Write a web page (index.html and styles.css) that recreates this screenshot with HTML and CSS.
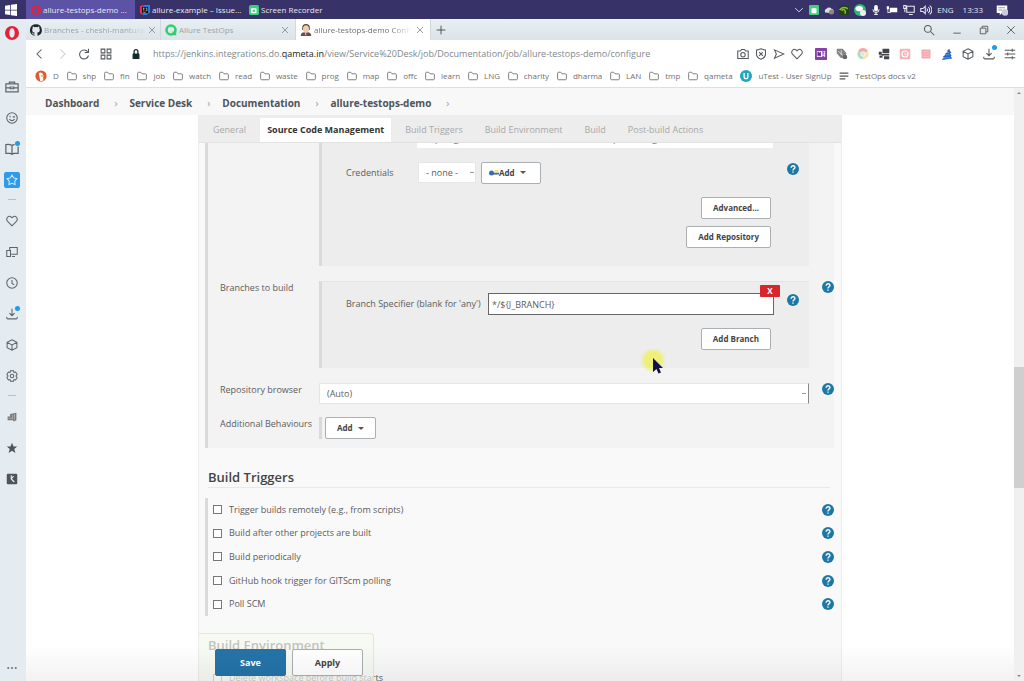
FILE: index.html
```html
<!DOCTYPE html>
<html lang="en">
<head>
<meta charset="utf-8">
<title>allure-testops-demo Config [Jenkins]</title>
<link rel="stylesheet" href="styles.css">
</head>
<body>
<svg class="defs" aria-hidden="true">
  <symbol id="opera" viewBox="0 0 16 16"><path fill="#e3223a" fill-rule="evenodd" d="M8 0a8 8 0 1 0 0 16A8 8 0 0 0 8 0zm0 2.600c2 0 3.100 2.400 3.100 5.400S10 13.400 8 13.400 4.900 11 4.900 8 6 2.600 8 2.600z"/></symbol>
  <symbol id="close" viewBox="0 0 16 16"><path d="M2 2l12 12M14 2L2 14"/></symbol>
  <symbol id="folder" viewBox="0 0 16 16"><path d="M1 12.500V3.500q0-1.500 1.500-1.500h3.500l2 2.500h5.500q1.500 0 1.500 1.500v6.500q0 1.500-1.500 1.500h-11Q1 14 1 12.500z"/></symbol>
  <symbol id="heart" viewBox="0 0 16 16"><path d="M8 14.500L2.200 8.600C-1 5 3 0 6.800 2.600L8 3.800l1.200-1.200C13 0 17 5 13.800 8.600z"/></symbol>
  <symbol id="cube" viewBox="0 0 16 16"><path d="M8 1l6.500 3.500v7L8 15l-6.500-3.500v-7zM1.500 4.500L8 8l6.500-3.500M8 8v7"/></symbol>
  <symbol id="download" viewBox="0 0 16 16"><path d="M8 1v9M4.500 6.800L8 10.200l3.500-3.400M1 11.500v1.500q0 1.500 1.500 1.500h11Q15 14.500 15 13v-1.500"/></symbol>
  <symbol id="help" viewBox="0 0 16 16"><circle cx="8" cy="8" r="8" fill="#1d78a8"/><path d="M5.500 6.300C5.500 2.500 11 3 10.600 6.200 10.400 7.700 8 8 8 10M8 11.300v1.700" fill="none" stroke="#fff" stroke-width="1.800"/></symbol>
</svg>
<div class="screen">
  <header class="taskbar">
    <button class="start" aria-label="Start"><svg class="i12" viewBox="0 0 16 16"><path fill="#fff" d="M0 2.200l7-1v6.300H0zM8 1l8-1v7.500H8zM0 8.500h7v6.300l-7-1zM8 8.500h8V16l-8-1z"/></svg></button>
    <button class="task task-on"><svg class="i10"><use href="#opera"/></svg>allure-testops-demo ...</button>
    <button class="task"><svg class="i10" viewBox="0 0 16 16"><path fill="#e5396b" d="M0 2l6-2v16l-6-3z"/><path fill="#2b7ff0" d="M6 0h10v12l-6 4H5z"/><path fill="#111" d="M3 3h10v10H3z"/><path stroke="#fff" d="M5 5h2M6 5v4M9 5h2v4H9M5 11.500h4"/></svg>allure-example – Issue...</button>
    <button class="task"><svg class="i10" viewBox="0 0 16 16"><rect width="16" height="16" rx="3" fill="#39cf7c"/><rect x="3" y="5" width="9" height="8" rx="1" fill="#fff"/><circle cx="8" cy="9" r="2" fill="#39cf7c"/></svg>Screen Recorder</button>
    <div class="tray">
      <svg class="i10 line" viewBox="0 0 16 16"><path d="M2 5l6 6 6-6"/></svg>
      <svg class="i10" viewBox="0 0 16 16"><rect width="16" height="16" rx="2" fill="#43cf7f"/><rect x="4" y="5" width="8" height="8" rx="1" fill="#fff"/></svg>
      <svg class="i10" viewBox="0 0 16 16"><path fill="#ddd" d="M2 12a4 4 0 0 1 2-6 5 5 0 0 1 8 0 4 4 0 0 1 2 7z"/><circle cx="12" cy="11" r="4" fill="#888"/></svg>
      <svg class="i10" viewBox="0 0 16 16"><rect width="16" height="16" fill="#27401f"/><path d="M1 8q5-7 13-2M4 9q4-4 6 1v4" fill="none" stroke="#7fc31c" stroke-width="2.500"/></svg>
      <svg class="i12" viewBox="0 0 16 16"><circle cx="8" cy="8" r="8" fill="#2eb872"/><ellipse cx="7" cy="6" rx="5" ry="3.500" fill="#fff"/><circle cx="12" cy="12" r="4" fill="#eee"/></svg>
      <svg class="i10" viewBox="0 0 16 16"><rect x="5" y="0" width="6" height="10" rx="3" fill="#fff"/><path d="M3 7q0 5 5 5t5-5M8 12v4M5 15h6" stroke="#fff" fill="none" stroke-width="1.500"/></svg>
      <svg class="i12" viewBox="0 0 16 16"><path fill="#fff" d="M5 5h10v6H5zM1 3h3v4H1zM2 7h1v4h3v1H2z"/></svg>
      <svg class="i12 line" viewBox="0 0 16 16"><path d="M5 3h10v8H5zM8 14h5M1 2h3v4H1zM2.500 6v5"/></svg>
      <svg class="i12 line" viewBox="0 0 16 16"><path d="M1 6h3l3-3v10l-3-3H1zM9 6q2 2 0 4M11 4q4 4 0 8M13 2q6 6 0 12"/></svg>
      <span>ENG</span><span class="clock">13:33</span>
      <svg class="i12" viewBox="0 0 16 16"><path fill="#fff" d="M1 2h14v10H8l-3 3v-3H1z"/><circle cx="12" cy="11" r="4.500" fill="#c9c9df"/><path d="M3 5h9M3 8h5" stroke="#777"/></svg>
    </div>
  </header>

  <div class="browser">
    <nav class="rail" aria-label="Browser sidebar">
      <button class="rail-logo" aria-label="Opera"><svg class="i14"><use href="#opera"/></svg></button>
      <button aria-label="Workspace"><svg class="i14 line" viewBox="0 0 16 16"><path d="M1 4.500h14v9H1zM5 4.500v-2h6v2M1 9h5M10 9h5M6 8h4v2H6z"/></svg></button>
      <button aria-label="Smiley"><svg class="i12 line" viewBox="0 0 16 16"><circle cx="8" cy="8" r="7"/><path d="M4.500 9.500q3.500 4 7 0M5.500 5v2M9 6.500h3"/></svg></button>
      <button class="dot" aria-label="News"><svg class="i14 line" viewBox="0 0 16 16"><path d="M8 4Q5 2 1 3v10h5l2 1 2-1h5V5M8 4v10M8 4q1-1 3-1"/></svg></button>
      <button aria-label="Pinboards"><span class="rail-on"><svg class="i12 line" viewBox="0 0 16 16"><path d="M8 1.500l2.200 3.700 4.300 1-2.800 3.400.3 4.400L8 12.500 4 14l.3-4.400L1.500 6.200l4.300-1z"/></svg></span></button>
      <hr>
      <button aria-label="Bookmarks"><svg class="i12 line"><use href="#heart"/></svg></button>
      <button aria-label="My Flow"><svg class="i12 line" viewBox="0 0 16 16"><path d="M5 6V2h10v9H7M1 6h5v8H1zM8 14h4"/></svg></button>
      <button aria-label="History"><svg class="i12 line" viewBox="0 0 16 16"><circle cx="8" cy="8" r="7"/><path d="M8 4v4.500l3 2"/></svg></button>
      <button class="dot" aria-label="Downloads"><svg class="i12 line"><use href="#download"/></svg></button>
      <button aria-label="Extensions"><svg class="i12 line"><use href="#cube"/></svg></button>
      <button aria-label="Settings"><svg class="i12 line" viewBox="0 0 16 16"><path d="M6 1h4l.6 2.200 2.200-.5 2 3.400L13.300 8l1.500 1.900-2 3.400-2.200-.5L10 15H6l-.6-2.200-2.200.5-2-3.400L2.700 8 1.200 6.100l2-3.400 2.200.5z"/><circle cx="8" cy="8" r="2.300"/></svg></button>
      <hr>
      <button aria-label="Tab extension"><svg class="i10" viewBox="0 0 16 16"><path fill="#777" d="M5 3l10-2v12l-5 2v-2H1V7h4z"/><path d="M9 4v8M12 3v9M2 10h6" stroke="#ccc"/></svg></button>
      <button aria-label="Favourites"><svg class="i12" viewBox="0 0 16 16"><path fill="#50555a" d="M8 1l2 5h5l-4 3.300 1.600 5.200L8 11.500l-4.600 3L5 9.300 1 6h5z"/></svg></button>
      <button aria-label="Timer"><svg class="i12" viewBox="0 0 16 16"><rect x="1" y="1" width="14" height="14" rx="1.500" fill="#50545a"/><path d="M7 3v5l4 4M10 4l-2 3" stroke="#eee" stroke-width="1.500" fill="none"/></svg></button>
      <button class="rail-more" aria-label="More"><svg class="i10" viewBox="0 0 16 16"><g fill="#777"><circle cx="2" cy="8" r="1.700"/><circle cx="8" cy="8" r="1.700"/><circle cx="14" cy="8" r="1.700"/></g></svg></button>
    </nav>

    <div class="window">
      <div class="tabs">
        <div class="tab"><svg class="i12" viewBox="0 0 16 16"><path fill="#1f252b" d="M8 .2a8 8 0 0 0-2.500 15.600c.4.100.5-.2.500-.4v-1.500c-2.200.5-2.700-1-2.700-1-.4-.9-.9-1.200-.9-1.200-.7-.5.100-.5.100-.5.800.100 1.200.8 1.200.8.700 1.200 1.900.9 2.300.7.100-.5.300-.9.500-1.100-1.800-.2-3.600-.9-3.600-4 0-.9.300-1.600.8-2.100-.1-.2-.4-1 .1-2.100 0 0 .7-.2 2.200.8a7.600 7.600 0 0 1 4 0c1.500-1 2.200-.8 2.200-.8.400 1.100.2 1.900.1 2.100.5.600.8 1.300.8 2.100 0 3.100-1.900 3.800-3.700 4 .3.300.6.800.6 1.500v2.200c0 .2.100.5.600.4A8 8 0 0 0 8 .2z"/></svg><span class="fade">Branches - cheshi-mantu/al</span><button aria-label="Close tab"><svg class="i8 line"><use href="#close"/></svg></button></div>
        <div class="tab"><svg class="i12" viewBox="0 0 16 16"><circle cx="8" cy="8" r="6" fill="none" stroke="#2fd06f" stroke-width="3.500"/><path fill="#2fd06f" d="M10 10h5v5h-5z"/></svg><span>Allure TestOps</span><button aria-label="Close tab"><svg class="i8 line"><use href="#close"/></svg></button></div>
        <div class="tab tab-on"><svg class="i12" viewBox="0 0 16 16"><path fill="#5a4030" d="M3 5q0-5 5-5t5 5v3H3z"/><ellipse cx="8" cy="6.500" rx="4" ry="5" fill="#efcfae"/><path fill="#555" d="M1 16q0-5 5-5h4q5 0 5 5z"/><path fill="#fff" d="M6 11h4l-2 5z"/><path fill="#c92f2f" d="M7 11.500h3l-1 4z"/></svg><span class="fade">allure-testops-demo Confi</span><button aria-label="Close tab"><svg class="i8 line"><use href="#close"/></svg></button></div>
        <button class="newtab" aria-label="New tab"><svg class="i10 line" viewBox="0 0 16 16"><path d="M8 1v14M1 8h14"/></svg></button>
        <div class="wincontrols">
          <button aria-label="Search tabs"><svg class="i12 line" viewBox="0 0 16 16"><circle cx="6.500" cy="6.500" r="4.500"/><path d="M10 10l5 5"/></svg></button>
          <button aria-label="Minimize"><svg class="i10 line" viewBox="0 0 16 16"><path d="M2 13h12"/></svg></button>
          <button aria-label="Restore"><svg class="i10 line" viewBox="0 0 16 16"><path d="M2 5h9v9H2zM5 5V2h9v9h-3"/></svg></button>
          <button aria-label="Close"><svg class="i10 line"><use href="#close"/></svg></button>
        </div>
      </div>

      <div class="address">
        <div class="navbtns">
          <button aria-label="Back"><svg class="i12 line" viewBox="0 0 16 16"><path d="M10 2L4 8l6 6"/></svg></button>
          <button class="dim" aria-label="Forward"><svg class="i12 line" viewBox="0 0 16 16"><path d="M6 2l6 6-6 6"/></svg></button>
          <button aria-label="Reload"><svg class="i12 line" viewBox="0 0 16 16"><path d="M13 5a6 6 0 1 0 1 5M14 1v5H9"/></svg></button>
          <button aria-label="Speed dial"><svg class="i12 line" viewBox="0 0 16 16"><path d="M1.500 1.500h5v5h-5zM9.500 1.500h5v5h-5zM1.500 9.500h5v5h-5zM9.500 9.500h5v5h-5z"/></svg></button>
        </div>
        <svg class="i10 lock" viewBox="0 0 16 16"><rect x="2.500" y="7" width="11" height="9" rx="1" fill="#14282b"/><path d="M5 8V4q0-3 3-3t3 3v4" fill="none" stroke="#14282b" stroke-width="2"/></svg>
        <span class="url">https://jenkins.integrations.do.<b>qameta.in</b>/view/Service%20Desk/job/Documentation/job/allure-testops-demo/configure</span>
        <div class="page-actions">
          <svg class="i12 line" viewBox="0 0 16 16"><path d="M1 4h3.500L6 2h4l1.500 2H15v10H1z"/><circle cx="8" cy="9" r="3"/></svg>
          <svg class="i12 line" viewBox="0 0 16 16"><path d="M8 1l6 2v5q0 5-6 7-6-2-6-7V3zM5.500 5.500l5 5M10.500 5.500l-5 5"/></svg>
          <svg class="i12 line" viewBox="0 0 16 16"><path d="M2 2.500L14.500 8 2 13.500 4.500 8z"/></svg>
          <svg class="i12 line"><use href="#heart"/></svg>
        </div>
        <div class="extensions">
          <svg class="i12" viewBox="0 0 16 16"><rect width="16" height="16" rx="1" fill="#8443a8"/><path fill="#fff" d="M2.500 4h11v8h-11z"/><path stroke="#6a2b92" stroke-width="1.500" d="M4 11V5l3 6V5M9.500 5.500h3M9.500 8h3M9.500 11h3"/></svg>
          <svg class="i12" viewBox="0 0 16 16"><path fill="#858585" d="M1 1h8l5 6-3 7-5-1L1 7z"/><path d="M3 4l6 6M7 3v6" stroke="#eee"/><circle cx="12" cy="12" r="3" fill="#666"/></svg>
          <svg class="i12" viewBox="0 0 16 16"><path fill="#f5aaa4" d="M8 8L1.500 4.500a7 7 0 0 1 13 0z"/><path fill="#fae59f" d="M8 8l6.500-3.500A7 7 0 0 1 8 15z"/><path fill="#a9dfc0" d="M8 8L1.500 4.500A7 7 0 0 0 8 15z"/><circle cx="8" cy="8" r="3" fill="#cfe2f8" stroke="#fff"/></svg>
          <svg class="i12" viewBox="0 0 16 16"><path fill="#414347" d="M6 1h9v6H6zM1 5h4v4H1zM5 8h10v2H5zM2 10h4v3H2zM8 11h7v4H8z"/></svg>
          <svg class="i12" viewBox="0 0 16 16"><rect x="1" y="1" width="14" height="14" rx="1" fill="#f5b5b7"/><circle cx="8" cy="8" r="4" fill="none" stroke="#fff" stroke-width="1.500"/><path d="M8 6v3h2" stroke="#fff" fill="none"/></svg>
          <svg class="i12" viewBox="0 0 16 16"><rect x="2" y="2" width="12" height="12" rx="1" fill="#f3a9ae"/><path d="M4 5h8M4 8h8M4 11h8" stroke="#f7cfd1"/></svg>
          <svg class="i12" viewBox="0 0 16 16"><path fill="#2764c4" d="M11 1l1 3 2 2-2 1 2 3-1 1 2 3-7 1-7 1 3-4H2l4-3-1-1 4-3-1-1z"/><path d="M3 13h9M6 9h5M8 6h3" stroke="#76a9ee"/></svg>
          <svg class="i12 line"><use href="#cube"/></svg>
          <span class="dot"><svg class="i12 line"><use href="#download"/></svg></span>
          <svg class="i12 line" viewBox="0 0 16 16"><path d="M1 3h14M1 8h14M1 13h14M11 1v4M5 6v4M11 11v4"/></svg>
        </div>
      </div>

      <nav class="bookmarks" aria-label="Bookmarks bar">
        <a href="#"><svg class="i12" viewBox="0 0 16 16"><circle cx="8" cy="8" r="7.500" fill="#df5a2f"/><path fill="#fff" d="M5 4q5-2 6 3v7l-4 1z"/><path fill="#f4ad2d" d="M8 7h4v2H8z"/></svg>D</a>
        <a href="#"><svg class="i10 line"><use href="#folder"/></svg>shp</a>
        <a href="#"><svg class="i10 line"><use href="#folder"/></svg>fin</a>
        <a href="#"><svg class="i10 line"><use href="#folder"/></svg>job</a>
        <a href="#"><svg class="i10 line"><use href="#folder"/></svg>watch</a>
        <a href="#"><svg class="i10 line"><use href="#folder"/></svg>read</a>
        <a href="#"><svg class="i10 line"><use href="#folder"/></svg>waste</a>
        <a href="#"><svg class="i10 line"><use href="#folder"/></svg>prog</a>
        <a href="#"><svg class="i10 line"><use href="#folder"/></svg>map</a>
        <a href="#"><svg class="i10 line"><use href="#folder"/></svg>offc</a>
        <a href="#"><svg class="i10 line"><use href="#folder"/></svg>learn</a>
        <a href="#"><svg class="i10 line"><use href="#folder"/></svg>LNG</a>
        <a href="#"><svg class="i10 line"><use href="#folder"/></svg>charity</a>
        <a href="#"><svg class="i10 line"><use href="#folder"/></svg>dharma</a>
        <a href="#"><svg class="i10 line"><use href="#folder"/></svg>LAN</a>
        <a href="#"><svg class="i10 line"><use href="#folder"/></svg>tmp</a>
        <a href="#"><svg class="i10 line"><use href="#folder"/></svg>qameta</a>
        <a href="#"><svg class="i12" viewBox="0 0 16 16"><circle cx="8" cy="8" r="8" fill="#22a6be"/><path d="M5.500 4v5q0 2.500 2.500 2.500t2.500-2.500V4" fill="none" stroke="#fff" stroke-width="1.800"/></svg>uTest - User SignUp</a>
        <a href="#"><svg class="i10" viewBox="0 0 16 16"><path d="M1 3.500h14M1 8h14M1 12.500h9" stroke="#555" stroke-width="2"/></svg>TestOps docs v2</a>
      </nav>

      <div class="viewport">
        <main class="page">
          <nav class="crumbs" aria-label="Breadcrumb">
            <a href="#">Dashboard</a><a href="#">Service Desk</a><a href="#">Documentation</a><a href="#">allure-testops-demo</a>
          </nav>
          <form class="config">
            <div class="sections">
              <a href="#">General</a><a class="on" href="#">Source Code Management</a><a href="#">Build Triggers</a><a href="#">Build Environment</a><a href="#">Build</a><a href="#">Post-build Actions</a>
            </div>
            <div class="scroller">
              <section class="scm">
                <div class="box repo">
                  <div class="line-row url-row"><label for="url">Repository URL</label><input id="url" value="https://github.com/cheshi-mantu/allure-testops-demo.git"></div>
                  <div class="line-row cred">
                    <label for="cred">Credentials</label>
                    <select id="cred" class="picker"><option>- none -</option></select>
                    <button type="button" class="btn key"><svg class="i10" viewBox="0 0 16 16"><circle cx="4" cy="8" r="4" fill="#3d6cab"/><path d="M6 9h10" stroke="#3d6cab" stroke-width="3"/><path d="M9 5h6" stroke="#efe36b" stroke-width="4"/></svg>Add<i class="caret"></i></button>
                    <button type="button" class="help" aria-label="Help"><svg class="i12"><use href="#help"/></svg></button>
                  </div>
                  <div class="actions"><button type="button" class="btn">Advanced...</button><button type="button" class="btn">Add Repository</button></div>
                </div>

                <span class="name">Branches to build</span>
                <div class="box branch">
                  <button type="button" class="remove">X</button>
                  <div class="line-row spec"><label for="spec">Branch Specifier (blank for 'any')</label><input id="spec" value="*/${J_BRANCH}">
                    <button type="button" class="help" aria-label="Help"><svg class="i12"><use href="#help"/></svg></button></div>
                  <div class="actions"><button type="button" class="btn">Add Branch</button></div>
                </div>
                <button type="button" class="help" aria-label="Help"><svg class="i12"><use href="#help"/></svg></button>

                <label class="name" for="browser">Repository browser</label>
                <select id="browser" class="picker wide"><option>(Auto)</option></select>
                <button type="button" class="help" aria-label="Help"><svg class="i12"><use href="#help"/></svg></button>

                <span class="name name-last">Additional Behaviours</span>
                <div class="behaviours"><button type="button" class="btn">Add<i class="caret"></i></button></div>
              </section>

              <h2>Build Triggers</h2>
              <ul class="triggers">
                <li><label><input type="checkbox">Trigger builds remotely (e.g., from scripts)</label><button type="button" class="help" aria-label="Help"><svg class="i12"><use href="#help"/></svg></button></li>
                <li><label><input type="checkbox">Build after other projects are built</label><button type="button" class="help" aria-label="Help"><svg class="i12"><use href="#help"/></svg></button></li>
                <li><label><input type="checkbox">Build periodically</label><button type="button" class="help" aria-label="Help"><svg class="i12"><use href="#help"/></svg></button></li>
                <li><label><input type="checkbox">GitHub hook trigger for GITScm polling</label><button type="button" class="help" aria-label="Help"><svg class="i12"><use href="#help"/></svg></button></li>
                <li><label><input type="checkbox">Poll SCM</label><button type="button" class="help" aria-label="Help"><svg class="i12"><use href="#help"/></svg></button></li>
              </ul>
              <h2 class="env">Build Environment</h2>
              <ul class="triggers more">
                <li><label><input type="checkbox">Delete workspace before build starts</label></li>
              </ul>
            </div>
            <div class="savebar"><button type="button" class="btn primary">Save</button><button type="button" class="btn">Apply</button></div>
          </form>
        </main>
        <div class="scrollbar"><i class="up"></i><div class="thumb"></div><i class="down"></i></div>
      </div>
    </div>
  </div>
  <svg class="cursor" viewBox="0 0 26 28"><defs><radialGradient id="glow"><stop offset=".6" stop-color="#eef05a" stop-opacity=".8"/><stop offset="1" stop-color="#eef05a" stop-opacity="0"/></radialGradient></defs><circle cx="13" cy="11" r="13" fill="url(#glow)"/><path d="M13 9v14l3.500-3 2 4.500 2.500-1-2-4.500h4z" fill="#10104a"/></svg>
</div>
</body>
</html>
```
FILE: styles.css
```css
* { box-sizing: border-box; }
body { margin: 0; font: 9px/14px "Open Sans", "Noto Sans", sans-serif; color: #5c5c5c; background: #fff; }
button, input, select { font: inherit; color: inherit; margin: 0; }
button { background: none; border: 0; padding: 0; display: flex; align-items: center; justify-content: center; }
a { color: inherit; text-decoration: none; }
svg { display: block; flex: none; }
.defs { position: absolute; width: 0; height: 0; }
.i8 { width: 8px; height: 8px; }
.i10 { width: 10px; height: 10px; }
.i12 { width: 12px; height: 12px; }
.i14 { width: 14px; height: 14px; }
.line { fill: none; stroke: currentColor; stroke-width: 1.4; }
.screen { position: relative; height: 100vh; display: flex; flex-direction: column; overflow: hidden; }

/* Desktop taskbar */
.taskbar { flex: none; height: 19px; display: flex; background: #373268; color: #e9e8f2; font-size: 8px; white-space: nowrap; }
.start { width: 26px; padding-right: 4px; }
.task { width: 109px; gap: 2px; padding-left: 5px; justify-content: flex-start; }
.task-on { background: #5c53a6; }
.tray { margin-left: auto; padding-right: 16px; display: flex; align-items: center; gap: 5px; }
.clock { padding: 0 8px 0 4px; }

/* Browser chrome */
.browser { flex: 1; min-height: 0; display: flex; }
.rail { flex: none; width: 26px; display: flex; flex-direction: column; background: #e4ecf1; color: #5d666c; padding-right: 2px; }
.rail button { height: 31px; flex: none; }
.rail .rail-logo { height: 28px; margin-bottom: 24px; }
.rail hr { width: 8px; margin: 4px auto 5px; border: 0; border-top: 1px solid #b8c2c8; flex: none; }
.rail-on { background: #2d9bea; color: #d5ecfb; padding: 2px; border-radius: 2px; }
.rail .rail-more { margin-top: auto; height: 26px; }
.dot { position: relative; }
.dot::after { content: ""; position: absolute; width: 5px; height: 5px; border-radius: 50%; background: #1e9bf0; right: -2px; top: -3px; }
.rail .dot::after { right: 4px; top: 8px; }
.window { flex: 1; min-width: 0; display: flex; flex-direction: column; }
.tabs { flex: none; height: 21px; display: flex; background: linear-gradient(#e9eff2, #dbe4e8); color: #9ba4a9; font-size: 8px; white-space: nowrap; }
.tab { width: 135px; display: flex; align-items: center; gap: 2px; padding: 0 6px 0 4px; border-right: 1px solid #d0d9dd; }
.tab button { margin-left: auto; flex: none; color: #6f777c; }
.tab-on { background: #fff; color: #6b7074; }
.fade { -webkit-mask-image: linear-gradient(90deg, #000 80%, transparent); mask-image: linear-gradient(90deg, #000 80%, transparent); }
.newtab { width: 20px; color: #444; }
.wincontrols { margin-left: auto; display: flex; align-items: center; gap: 17px; padding-right: 8px; color: #555; }
.address { flex: none; height: 27px; display: flex; align-items: center; padding: 0 8px; color: #555a5e; }
.navbtns { display: flex; gap: 10px; }
.dim { color: #c8cdd0; }
.lock { margin: 0 12px 0 19px; }
.url { color: #80888c; white-space: nowrap; }
.url b { font-weight: 400; color: #222; }
.page-actions { margin-left: auto; display: flex; gap: 6px; padding-right: 12px; }
.extensions { display: flex; align-items: center; gap: 9px; }
.bookmarks { flex: none; height: 21px; display: flex; justify-content: space-between; align-items: flex-start; padding: 2px 108px 0 9px; border-bottom: 1px solid #d9e1e5; color: #707070; font-size: 8px; white-space: nowrap; }
.bookmarks a { display: flex; align-items: center; gap: 6px; height: 14px; }

/* Page */
.viewport { flex: 1; min-height: 0; display: flex; position: relative; }
.viewport::after { content: ""; position: absolute; left: 0; right: 10px; bottom: 0; height: 36px; background: linear-gradient(transparent, rgba(0, 0, 0, .05)); pointer-events: none; }
.page { flex: 1; min-width: 0; display: flex; flex-direction: column; }
.crumbs { flex: none; height: 27px; display: flex; align-items: center; padding: 2px 0 0 19px; background: #f8f8f8; color: #4d545b; font-size: 10px; font-weight: 700; }
.crumbs a::after { content: "›"; color: #999; font-weight: 400; margin: 0 12px 0 15px; }
.config { flex: 1; min-height: 0; margin: 0 172px; position: relative; display: flex; flex-direction: column; background: #f9f9f9; border: solid #ececec; border-width: 0 1px; }
.sections { flex: none; height: 28px; display: flex; background: #ededed; color: #a8a8a8; border-bottom: 1px solid #e2e2e2; padding: 3px 0 0 6px; white-space: nowrap; }
.sections a { padding: 5px 8px 0; margin-right: 6px; }
.sections .on { background: #fff; color: #333; font-weight: 700; padding: 5px 7px 0; }
.scroller { flex: 1; min-height: 0; overflow: hidden; padding: 0 7px 0 6px; }
.scm { display: grid; grid-template-columns: 99px 1fr 25px; background: #f3f3f3; border-left: 3px solid #dadada; padding: 0 0 9px 12px; }
.box { grid-column: 2; background: #ededed; border-left: 3px solid #dadada; margin-bottom: 15px; padding-left: 24px; position: relative; }
.repo { height: 123px; }
.line-row { display: flex; align-items: center; }
.url-row { margin-top: -15px; height: 20px; padding-right: 36px; }
.url-row label { width: 71px; white-space: nowrap; }
.url-row input { flex: 1; height: 20px; border: 0; padding: 0 6px; background: #fff; }
.cred { margin-top: 13px; height: 23px; padding-right: 10px; }
.cred label { width: 72px; }
.picker { appearance: none; border: 1px solid #e6e6e6; background: #fff; height: 21px; padding: 1px 7px 0; }
.cred .picker { width: 58px; margin-right: 5px; background: linear-gradient(#999, #999) 51px 9px / 4px 1px no-repeat #fff; }
.help { width: 12px; height: 12px; flex: none; }
.cred .help { margin: 0 0 8px auto; }
.btn { height: 22px; padding: 0 11px; border: 1px solid #a9afb3; border-radius: 2px; background: #fff; color: #444; font-size: 8px; font-weight: 700; white-space: nowrap; }
.key { padding: 0 14px 0 7px; }
.caret { border: 3px solid transparent; border-top-color: #555; border-bottom: 0; margin-left: 5px; }
.actions { display: flex; flex-direction: column; align-items: flex-end; gap: 7px; padding: 13px 38px 0 0; }
.branch { height: 87px; padding-top: 11px; border-top: 1px solid #e4e4e4; }
.spec { padding-right: 10px; }
.spec label { flex: none; width: 142px; white-space: nowrap; }
.spec input { flex: 1; min-width: 0; height: 22px; border: 1px solid #666; background: #fff; padding: 0 3px; margin-right: 13px; }
.spec .help { margin-bottom: 8px; }
.remove { position: absolute; right: 29px; top: 3px; width: 20px; height: 12px; background: #d8272c; color: #fff; font-size: 8px; font-weight: 700; border-radius: 1px; }
.scm > .help { justify-self: end; }
.name { grid-column: 1; white-space: nowrap; }
.name-last { margin-top: 13px; }
.wide { width: 100%; border-right: 1px solid #888; background: linear-gradient(#999, #999) right 2px top 9px / 4px 1px no-repeat #fff; }
.behaviours { border-left: 3px solid #dadada; padding-left: 3px; margin-top: 13px; }
h2 { margin: 20px 4px 10px 3px; font-size: 13px; line-height: 19px; font-weight: 600; color: #444; border-bottom: 1px solid #e8e8e8; }
.triggers { list-style: none; margin: 0; padding: 0 0 0 5px; border-left: 3px solid #dadada; min-height: 118px; display: flex; flex-direction: column; }
.triggers li { flex: 1; display: flex; align-items: center; justify-content: space-between; }
.triggers label { display: flex; align-items: center; gap: 7px; }
.triggers input { appearance: none; width: 9px; height: 9px; border: 1px solid #777; background: #fff; }
.env { border: 0; }
.more { min-height: 26px; border-color: transparent; }
.savebar { position: absolute; left: 0; bottom: 0; height: 48px; padding: 15px 10px 0 16px; display: flex; gap: 6px; background: rgba(246, 249, 241, .7); border: 1px solid #dcebdd; border-width: 1px 1px 0 0; border-radius: 0 4px 0 0; }
.savebar .btn { width: 71px; height: 27px; font-size: 9px; }
.savebar .primary { background: #2473a8; border-color: #2473a8; color: #fff; }
.scrollbar { flex: none; width: 10px; background: #f0f0f0; display: flex; flex-direction: column; align-items: center; justify-content: space-between; padding: 4px 0; position: relative; }
.scrollbar i { border: 2px solid transparent; }
.scrollbar .up { border-bottom-color: #888; border-top: 0; }
.scrollbar .down { border-top-color: #888; border-bottom: 0; }
.thumb { position: absolute; top: 47%; width: 100%; height: 121px; background: #cfcfcf; }
.cursor { position: absolute; left: 640px; top: 349px; width: 26px; height: 28px; }
```
